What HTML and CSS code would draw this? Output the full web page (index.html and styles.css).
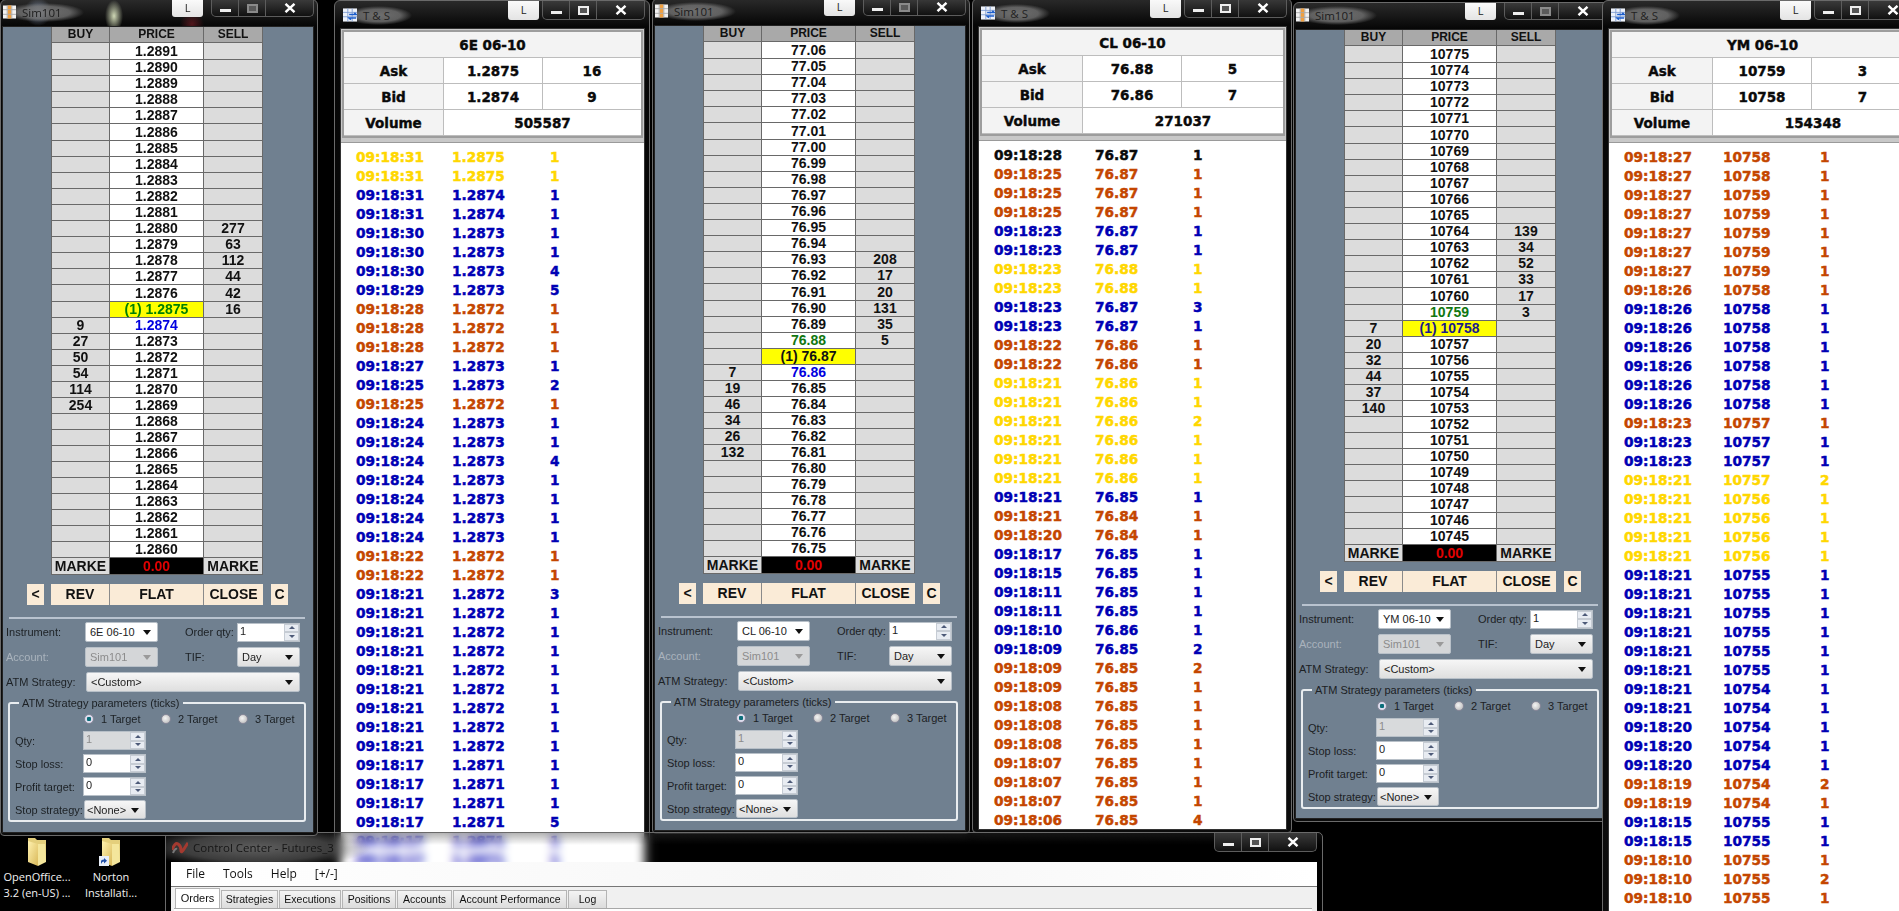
FILE: index.html
```html
<!DOCTYPE html>
<html lang="en">

<head>
  <meta charset="UTF-8">
  <meta name="viewport" content="width=device-width, initial-scale=1.0">
  <title>Futures_3</title>
  <link rel="stylesheet" href="styles.css">
</head>

<body>
  <div id="desktop">
    <!-- desktop icons -->
    <div class="desk-icon icon-a">
      <svg class="folder" viewBox="0 0 20 28"><use href="#folder"></use></svg>
      <span>OpenOffice...<br>3.2 (en-US) ...</span>
    </div>
    <div class="desk-icon icon-b">
      <svg class="folder" viewBox="0 0 20 28"><use href="#folder"></use></svg>
      <svg class="shortcut" viewBox="0 0 10 10"><rect width="10" height="10" fill="#e8eef8"/><path d="M2 8V5.500Q2 3.500 5 3.500V2l3 2.700L5 7.400V5.600Q3.200 5.600 2 8z" fill="#1f4fa8"/></svg>
      <span>Norton<br>Installati...</span>
    </div>

    <!-- control center -->
    <div class="cc">
      <div class="cc-bar">
        <svg class="cc-icon" viewBox="0 0 16 14"><path d="M0 9Q3 1 6 3T9 9t3-1 4-6" fill="none" stroke="#a33a30" stroke-width="3"/><path d="M1 12Q3 7 5 8" fill="none" stroke="#777" stroke-width="2"/></svg>
        <span class="cc-title">Control Center - Futures_3</span>
        <div class="caption cc-caption">
          <div class="cap-btn cap-min"><i></i></div>
          <div class="cap-btn cap-max"><i></i></div>
          <div class="cap-btn cap-close"><svg viewBox="0 0 12 10"><path d="M1.500 0.800 10.500 9.200M10.500 0.800 1.500 9.200" stroke="#fff" stroke-width="2.400"/></svg></div>
        </div>
      </div>
      <div class="cc-client">
        <ul class="cc-menu">
          <li>File</li>
          <li>Tools</li>
          <li>Help</li>
          <li>[+/-]</li>
        </ul>
        <ul class="cc-tabs">
          <li class="active tab-orders">Orders</li>
          <li class="tab-strategies">Strategies</li>
          <li class="tab-executions">Executions</li>
          <li class="tab-positions">Positions</li>
          <li class="tab-accounts">Accounts</li>
          <li class="tab-performance">Account Performance</li>
          <li class="tab-log">Log</li>
        </ul>
        <div class="cc-pane"></div>
      </div>
    </div>
  </div>

  <svg class="defs" width="0" height="0">
    <defs>
      <linearGradient id="fold" x1="0" y1="0" x2="1" y2="1">
        <stop offset="0" stop-color="#fff2b0"/>
        <stop offset="1" stop-color="#d9b95a"/>
      </linearGradient>
      <g id="folder">
        <path d="M1 0h7l2 2h9v22H1z" fill="#e4cf7c"/>
        <path d="M1 3 11 6v22L1 24z" fill="url(#fold)"/>
        <path d="M11 6h7l1 18-8 4z" fill="#f4e69c"/>
      </g>
    </defs>
  </svg>

  <script src="script.js"></script>
</body>

</html>
```

FILE: styles.css
```css
* {
  margin: 0;
  padding: 0;
  box-sizing: border-box;
}

html,
body {
  height: 100%;
  overflow: hidden;
  background-color: #000;
}

body {
  font-family: "Liberation Sans", Arial, sans-serif;
}

li {
  list-style: none;
}

#desktop {
  position: relative;
  width: 1899px;
  height: 911px;
  overflow: hidden;
}

.defs {
  position: absolute;
}

/* window frames */
.win {
  position: absolute;
  border: 1px solid #6a6a6a;
  border-radius: 6px 6px 4px 4px;
  background: linear-gradient(#2a2a2a, #060606 26px, #0c0c0c);
  display: flex;
  flex-direction: column;
}

.w1 {
  left: 0;
  top: -1px;
  width: 318px;
  height: 837px;
  padding: 0 3px 2px 1px;
  z-index: 7;
}

.w2 {
  left: 334px;
  top: 0;
  width: 316px;
  height: 880px;
  padding: 0 4px 0 5px;
  z-index: 1;
}

.w3 {
  left: 652px;
  top: -2px;
  width: 318px;
  height: 836px;
  padding: 0 3px 2px 1px;
  z-index: 2;
}

.w4 {
  left: 972px;
  top: -2px;
  width: 320px;
  height: 835px;
  padding: 0 4px 2px 5px;
  z-index: 3;
}

.w5 {
  left: 1293px;
  top: 2px;
  width: 318px;
  height: 820px;
  padding: 0 3px 2px 1px;
  z-index: 4;
}

.w6 {
  left: 1602px;
  top: 0;
  width: 320px;
  height: 930px;
  padding: 0 4px 0 5px;
  z-index: 5;
}

.bar {
  height: 26px;
  flex: none;
  display: flex;
  align-items: flex-start;
}

.w1 .bar {
  background:
    radial-gradient(circle at 36px 12px, rgba(190, 215, 255, .55), transparent 14px),
    radial-gradient(ellipse 9px 16px at 112px 16px, rgba(240, 250, 210, .85), transparent),
    radial-gradient(circle at 190px 24px, rgba(130, 30, 40, .6), transparent 12px);
}

.ts .bar {
  height: 27px;
}

.bar-icon {
  position: relative;
  width: 13px;
  height: 14px;
  margin: 5px 0 0 1px;
  flex: none;
}

.ts .bar-icon {
  width: 14px;
  height: 14px;
  margin: 7px 0 0 3px;
}

/* the glass glow runs out past the text on both sides */
.bar-title {
  margin: 3px 0 0 -12px;
  padding: 2px 22px 2px 18px;
  font-family: "Open Sans", sans-serif;
  font-size: 11.5px;
  line-height: 15px;
  color: #1c1c1c;
  background: radial-gradient(ellipse closest-side, rgba(120, 120, 120, .9), rgba(120, 120, 120, .75) 65%, transparent);
}

.ts .bar-title {
  margin-top: 5px;
  color: #222;
}

.l-btn {
  margin-left: auto;
  width: 31px;
  height: 17px;
  background: linear-gradient(#fafafa, #e4e4e4);
  border-radius: 0 0 3px 3px;
  font-family: "Open Sans", sans-serif;
  font-size: 11px;
  line-height: 15px;
  text-align: center;
  color: #222;
  flex: none;
}

.ts .l-btn {
  height: 19px;
  line-height: 17px;
}

.caption {
  display: flex;
  height: 17px;
  margin-left: 8px;
  border: 1px solid #5c5c5c;
  border-top: 0;
  border-radius: 0 0 5px 5px;
  background: linear-gradient(#3a3a3a, #111);
  flex: none;
}

.ts .caption {
  height: 19px;
  margin-left: 3px;
}

.cap-btn {
  display: flex;
  align-items: center;
  justify-content: center;
  width: 27px;
  border-right: 1px solid #5c5c5c;
}

.cap-close {
  width: 47px;
  border-right: 0;
}

.cap-min i {
  display: block;
  width: 11px;
  height: 3px;
  margin-top: 4px;
  background-color: #eee;
}

.cap-max i {
  display: block;
  width: 11px;
  height: 9px;
  border: 2px solid #eee;
  background-color: #555;
}

.dom .cap-max i {
  border-color: #8a8a8a;
  background-color: #5a5a5a;
}

.cap-close svg {
  width: 12px;
  height: 10px;
}

/* order ladder */
.dom-client {
  flex: 1;
  background-color: #708090;
  border: 1px solid #222;
  min-height: 0;
}

.ladder {
  margin-left: 48px;
  width: 212px;
  font-size: 14px;
  font-weight: bold;
  color: #111;
}

.row {
  display: grid;
  grid-template-columns: 59px 94px 59px;
  height: 16px;
  line-height: 15px;
  text-align: center;
}

.row.tall {
  height: 17px;
  line-height: 17px;
}

.row div {
  background-color: #dcdcdc;
  border-right: 1px solid #696969;
  border-bottom: 1px solid #696969;
  overflow: hidden;
}

.row div:first-child {
  border-left: 1px solid #696969;
}

.row .price {
  background-color: #fff;
}

.row .hit {
  background-color: #ff0;
  color: #008000;
}

.w3 .row .hit {
  color: #111;
}

.w5 .row .hit {
  color: #1a1a8c;
}

.row .bid {
  color: #0000e0;
}

.row .ask {
  color: #117711;
}

.head {
  font-size: 12px;
}

.head div,
.head .price {
  background-color: #a9a9a9;
}

.foot {
  height: 17px;
  line-height: 17px;
}

.foot .pnl {
  background-color: #000;
  color: #e00000;
}

.buttons {
  display: flex;
  margin: 9px 0 0 24px;
  height: 21px;
  font-size: 14px;
  font-weight: bold;
  line-height: 21px;
  text-align: center;
  color: #111;
}

.buttons div {
  background-color: #faebd7;
}

.btn-small {
  width: 17px;
}

.btn-rev {
  width: 59px;
  margin-left: 7px;
  border-right: 1px solid #8a8a8a;
}

.btn-flat {
  width: 94px;
  border-right: 1px solid #8a8a8a;
}

.btn-close {
  width: 59px;
  margin-right: 8px;
}

.sep {
  height: 2px;
  margin: 12px 8px 0 6px;
  background-color: #b9c3cf;
}

/* order form */
.dom-form {
  margin-top: 3px;
  padding: 0 0 0 3px;
  font-size: 11px;
  color: #1c2024;
}

.form-row {
  display: flex;
  align-items: center;
  height: 20px;
  margin-bottom: 5px;
}

.form-label {
  width: 79px;
  flex: none;
}

.form-label-right {
  width: 52px;
  margin-left: 27px;
  flex: none;
}

.dim {
  color: #aab3bd;
}

.combo {
  position: relative;
  height: 20px;
  line-height: 18px;
  padding-left: 4px;
  border: 1px solid #b8c0c8;
  border-radius: 2px;
  background: linear-gradient(#f6f6f6, #dfdfdf);
  color: #222;
}

.combo::after {
  content: "";
  position: absolute;
  right: 6px;
  top: 7px;
  border-left: 4px solid transparent;
  border-right: 4px solid transparent;
  border-top: 5px solid #111;
}

.combo-white {
  background: #fff;
}

.combo-dim {
  background: #d4d6d8;
  color: #8c8c8c;
}

.combo-dim::after {
  border-top-color: #9a9a9a;
}

.c-instrument,
.c-account {
  width: 73px;
}

.c-tif {
  width: 63px;
}

.c-atm {
  width: 214px;
  margin-left: 1px;
}

.c-stop {
  width: 62px;
  height: 19px;
  margin-left: 1px;
  padding-left: 2px;
}

.spin {
  display: flex;
  justify-content: space-between;
  background-color: #fff;
  border: 1px solid #b8c0c8;
  width: 63px;
  height: 19px;
  line-height: 15px;
  padding-left: 2px;
  color: #222;
}

.spin-dim {
  background-color: #d8dadc;
  color: #8c8c8c;
}

.spin b {
  display: flex;
  flex-direction: column;
  width: 15px;
  flex: none;
}

.spin i {
  flex: 1;
  display: flex;
  align-items: center;
  justify-content: center;
  background-color: #e8ecf2;
  border: 1px solid #c6ccd4;
}

.spin .up::after {
  content: "";
  border-left: 3px solid transparent;
  border-right: 3px solid transparent;
  border-bottom: 3px solid #4d5a78;
}

.spin .down::after {
  content: "";
  border-left: 3px solid transparent;
  border-right: 3px solid transparent;
  border-top: 3px solid #4d5a78;
}

.atm-group {
  width: 298px;
  height: 125px;
  margin: 3px 0 0 2px;
  padding: 2px 0 0 5px;
  border: 2px solid #e9edf0;
  border-radius: 3px;
  min-inline-size: 0;
}

.atm-group legend {
  margin-left: 4px;
  padding: 0 3px;
  line-height: 12px;
}

.radios {
  display: flex;
  height: 16px;
  margin: 0 0 4px 69px;
}

.radio {
  display: flex;
  align-items: center;
  gap: 7px;
  width: 77px;
  flex: none;
}

.radio i {
  width: 10px;
  height: 10px;
  border-radius: 50%;
  border: 1px solid #889;
  background: radial-gradient(circle at 40% 40%, #f4f4f4, #b4b4b4);
}

.radio .on {
  background: radial-gradient(circle, #0b6e7a 35%, #dde 45%);
}

.atm-row {
  display: flex;
  align-items: center;
  height: 19px;
  margin-bottom: 4px;
}

.atm-label {
  width: 68px;
  flex: none;
}

/* time and sales */
.ts-client {
  flex: 1;
  min-height: 0;
  display: flex;
  flex-direction: column;
  border: 1px solid #333;
  background-color: #c8c8c8;
}

.quote {
  margin: 1px 1px 0;
  border: 2px solid #9d9d9d;
  background-color: #f3f3f3;
  display: grid;
  grid-template-rows: repeat(4, 26px);
  grid-template-columns: 100px 99px 1fr;
  font-family: "DejaVu Sans", sans-serif;
  font-weight: bold;
  font-size: 13.5px;
  line-height: 26px;
  text-align: center;
  color: #0a0a0a;
  -webkit-text-stroke: .4px currentColor;
  flex: none;
}

.w4 .quote,
.w6 .quote {
  grid-template-columns: 101px 99px 1fr;
}

.quote div {
  border-bottom: 1px solid #bdbdbd;
}

.q-title {
  grid-column: 1 / 4;
}

.q-label {
  border-right: 1px solid #bdbdbd;
}

.q-val {
  background-color: #fff;
}

.q-mid {
  border-right: 1px solid #bdbdbd;
}

.q-wide {
  grid-column: 2 / 4;
}

.tape {
  flex: 1;
  margin-top: 4px;
  padding-top: 5px;
  overflow: hidden;
  background-color: #fff;
  border-top: 1px solid #9a9a9a;
  font-family: "DejaVu Sans", sans-serif;
  font-weight: bold;
  font-size: 13.7px;
  line-height: 19px;
}

.tape li {
  display: grid;
  grid-template-columns: 96px 98px 1fr;
  height: 19px;
  padding-left: 15px;
  -webkit-text-stroke: .45px currentColor;
}

.w4 .tape li {
  grid-template-columns: 101px 98px 1fr;
}

.w6 .tape li {
  grid-template-columns: 99px 97px 1fr;
}

.y {
  color: #ffd700;
}

.b {
  color: #0000b4;
}

.o {
  color: #c44600;
}

.k {
  color: #0a0a0a;
}

/* control center window */
.cc {
  position: absolute;
  left: 165px;
  top: 832px;
  width: 1158px;
  height: 90px;
  z-index: 6;
  border: 1px solid #6a6a6a;
  border-radius: 5px 5px 0 0;
  padding: 0 5px;
  backdrop-filter: blur(5px);
  background:
    radial-gradient(ellipse 115px 20px at 90px 15px, rgba(100, 100, 100, .95), rgba(100, 100, 100, .6) 65%, transparent),
    linear-gradient(rgba(40, 40, 40, .35), transparent 12px);
}

.cc-bar {
  display: flex;
  height: 29px;
}

.cc-icon {
  width: 16px;
  height: 14px;
  margin: 8px 0 0 1px;
  flex: none;
}

.cc-title {
  margin: 6px 0 0 5px;
  font-family: "Open Sans", sans-serif;
  font-size: 11.5px;
  line-height: 17px;
  color: #161616;
}

.cc-caption {
  margin-left: auto;
  height: 19px;
}

.cc-caption .cap-close {
  width: 47px;
}

.cc-client {
  background-color: #f0f0f0;
  font-family: "Open Sans", sans-serif;
  color: #111;
}

.cc-menu {
  display: flex;
  height: 25px;
  padding-left: 15px;
  font-size: 12px;
  line-height: 24px;
  background: linear-gradient(90deg, #fff, #f6f6f6 60%, #fff);
  border-bottom: 1px solid #777;
}

.cc-menu li {
  margin-right: 18px;
}

.cc-tabs {
  display: flex;
  height: 21px;
  padding: 3px 0 0 4px;
  font-family: "Liberation Sans", sans-serif;
  font-size: 10.5px;
  line-height: 17px;
  text-align: center;
}

.cc-tabs li {
  border: 1px solid #b4b4b4;
  border-bottom: 0;
  margin-right: 1px;
  background: linear-gradient(#f4f4f4, #dcdcdc);
}

.cc-tabs .active {
  background: #fff;
  margin-top: -2px;
  line-height: 18px;
  height: 20px;
  font-size: 11px;
}

.tab-orders {
  width: 45px;
}

.tab-strategies {
  width: 57px;
}

.tab-executions {
  width: 62px;
}

.tab-positions {
  width: 54px;
}

.tab-accounts {
  width: 55px;
}

.tab-performance {
  width: 114px;
}

.tab-log {
  width: 39px;
}

.cc-pane {
  height: 30px;
  margin: 0 5px 0 3px;
  border-top: 1px solid #a8a8a8;
  background-color: #fff;
}

/* desktop icons */
.desk-icon {
  position: absolute;
  top: 838px;
  width: 78px;
  text-align: center;
  font-family: "Open Sans", sans-serif;
  font-size: 11px;
  line-height: 16px;
  color: #f2f2f2;
  z-index: 0;
}

.icon-a {
  left: -2px;
}

.icon-b {
  left: 72px;
}

.folder {
  display: block;
  width: 20px;
  height: 28px;
  margin: 0 auto 3px;
}

.desk-icon span {
  display: block;
  white-space: nowrap;
}

.shortcut {
  position: absolute;
  left: 27px;
  top: 18px;
  width: 10px;
  height: 10px;
}
```

FILE: script.js
```js
var desktop = document.getElementById("desktop");

var SIM_ICON = '<svg class="bar-icon" viewBox="0 0 14 14"><rect width="14" height="14" fill="#f2f2f2"/><path d="M5 0h4v14H5z" fill="#f0a040"/><path d="M0 4.500h14M0 9.500h14M4.500 0v14M9.500 0v14" stroke="#aaa"/></svg>';
var TS_ICON = '<svg class="bar-icon" viewBox="0 0 16 15"><rect width="16" height="15" fill="#eef2fa"/><path d="M0 4.500h16M0 9.500h16M5.500 0v15M10.500 0v15" stroke="#7d9ad0"/><path d="M7 7h8l-2-2M15 11H7l2 2" fill="none" stroke="#1c5ecc" stroke-width="1.800"/></svg>';

function caption() {
  return '<div class="l-btn">L</div>' +
    '<div class="caption">' +
    '<div class="cap-btn cap-min"><i></i></div>' +
    '<div class="cap-btn cap-max"><i></i></div>' +
    '<div class="cap-btn cap-close"><svg viewBox="0 0 12 10"><path d="M1.500 0.800 10.500 9.200M10.500 0.800 1.500 9.200" stroke="#fff" stroke-width="2.400"/></svg></div>' +
    '</div>';
}

function spin(value, cls) {
  return '<div class="spin ' + (cls || "") + '">' + value + '<b><i class="up"></i><i class="down"></i></b></div>';
}

function combo(value, cls) {
  return '<div class="combo ' + cls + '">' + value + '</div>';
}

// 价格阶梯窗口
function domWindow(o) {
  var rows = "";
  for (var i = 0; i < o.count; i++) {
    var price = (o.start - i * o.tick).toFixed(o.digits);
    var buy = o.buy[i - o.hit - (o.buyOnHit ? 0 : 1)];
    var sell = o.sell[i - o.sellAt];
    var cls = "price";
    if (i == o.hit) {
      cls += " hit";
      price = "(1) " + price;
    } else if (i == o.hit + 1 && o.blue) {
      cls += " bid";
    } else if (i == o.hit - 1 && o.green) {
      cls += " ask";
    }
    var tall = i == 0 || i == 5 || i == 15 ? " tall" : "";
    rows += '<div class="row' + tall + '"><div>' + (buy || "") + '</div><div class="' + cls + '">' + price + '</div><div>' + (sell || "") + '</div></div>';
  }
  return '<div class="win dom ' + o.id + '">' +
    '<div class="bar">' + SIM_ICON + '<span class="bar-title">Sim101</span>' + caption() + '</div>' +
    '<div class="dom-client">' +
    '<div class="ladder">' +
    '<div class="row head"><div>BUY</div><div class="price">PRICE</div><div>SELL</div></div>' +
    rows +
    '<div class="row foot"><div>MARKE</div><div class="pnl">0.00</div><div>MARKE</div></div>' +
    '</div>' +
    '<div class="buttons"><div class="btn-small">&lt;</div><div class="btn-rev">REV</div><div class="btn-flat">FLAT</div><div class="btn-close">CLOSE</div><div class="btn-small">C</div></div>' +
    '<div class="sep"></div>' +
    '<div class="dom-form">' +
    '<div class="form-row"><span class="form-label">Instrument:</span>' + combo(o.instrument, "combo-white c-instrument") + '<span class="form-label-right">Order qty:</span>' + spin(1) + '</div>' +
    '<div class="form-row"><span class="form-label dim">Account:</span>' + combo("Sim101", "combo-dim c-account") + '<span class="form-label-right">TIF:</span>' + combo("Day", "c-tif") + '</div>' +
    '<div class="form-row"><span class="form-label">ATM Strategy:</span>' + combo("&lt;Custom&gt;", "c-atm") + '</div>' +
    '<fieldset class="atm-group"><legend>ATM Strategy parameters (ticks)</legend>' +
    '<div class="radios"><div class="radio"><i class="on"></i>1 Target</div><div class="radio"><i></i>2 Target</div><div class="radio"><i></i>3 Target</div></div>' +
    '<div class="atm-row"><span class="atm-label">Qty:</span>' + spin(1, "spin-dim") + '</div>' +
    '<div class="atm-row"><span class="atm-label">Stop loss:</span>' + spin(0) + '</div>' +
    '<div class="atm-row"><span class="atm-label">Profit target:</span>' + spin(0) + '</div>' +
    '<div class="atm-row"><span class="atm-label">Stop strategy:</span>' + combo("&lt;None&gt;", "c-stop") + '</div>' +
    '</fieldset>' +
    '</div></div></div>';
}

// 成交明细窗口
function tsWindow(o) {
  var rows = "";
  o.ticks.forEach(function (t) {
    var p = t.split(" ");
    var times = p[4] || 1;
    for (var i = 0; i < times; i++) {
      rows += '<li class="' + p[0] + '"><span>09:18:' + p[1] + '</span><span>' + p[2] + '</span><span>' + p[3] + '</span></li>';
    }
  });
  return '<div class="win ts ' + o.id + '">' +
    '<div class="bar">' + TS_ICON + '<span class="bar-title">T &amp; S</span>' + caption() + '</div>' +
    '<div class="ts-client">' +
    '<div class="quote">' +
    '<div class="q-title">' + o.name + '</div>' +
    '<div class="q-label">Ask</div><div class="q-val q-mid">' + o.ask[0] + '</div><div class="q-val">' + o.ask[1] + '</div>' +
    '<div class="q-label">Bid</div><div class="q-val q-mid">' + o.bid[0] + '</div><div class="q-val">' + o.bid[1] + '</div>' +
    '<div class="q-label">Volume</div><div class="q-val q-wide">' + o.volume + '</div>' +
    '</div>' +
    '<ul class="tape">' + rows + '</ul>' +
    '</div></div>';
}

var html = "";

html += domWindow({
  id: "w1", instrument: "6E 06-10", start: 1.2891, tick: 0.0001, digits: 4, count: 32,
  sellAt: 11, sell: [277, 63, 112, 44, 42, 16], hit: 16, blue: true,
  buy: [9, 27, 50, 54, 114, 254]
});
html += tsWindow({
  id: "w2", name: "6E 06-10", ask: ["1.2875", 16], bid: ["1.2874", 9], volume: 505587,
  ticks: [
    "y 31 1.2875 1 2", "b 31 1.2874 1 2", "b 30 1.2873 1 2", "b 30 1.2873 4", "b 29 1.2873 5",
    "o 28 1.2872 1 3", "b 27 1.2873 1", "b 25 1.2873 2", "o 25 1.2872 1",
    "b 24 1.2873 1 2", "b 24 1.2873 4", "b 24 1.2873 1 4", "o 22 1.2872 1 2",
    "b 21 1.2872 3", "b 21 1.2872 1 8", "b 17 1.2871 1 3", "b 17 1.2871 5", "b 17 1.2871 1 2"
  ]
});
html += domWindow({
  id: "w3", instrument: "CL 06-10", start: 77.06, tick: 0.01, digits: 2, count: 32,
  sellAt: 13, sell: [208, 17, 20, 131, 35, 5], hit: 19, blue: true, green: true,
  buy: [7, 19, 46, 34, 26, 132]
});
html += tsWindow({
  id: "w4", name: "CL 06-10", ask: ["76.88", 5], bid: ["76.86", 7], volume: 271037,
  ticks: [
    "k 28 76.87 1", "o 25 76.87 1 3", "b 23 76.87 1 2", "y 23 76.88 1 2", "b 23 76.87 3", "b 23 76.87 1",
    "o 22 76.86 1 2", "y 21 76.86 1 2", "y 21 76.86 2", "y 21 76.86 1 3", "b 21 76.85 1", "o 21 76.84 1",
    "o 20 76.84 1", "b 17 76.85 1", "b 15 76.85 1", "b 11 76.85 1 2", "b 10 76.86 1", "b 09 76.85 2",
    "o 09 76.85 2", "o 09 76.85 1", "o 08 76.85 1 3", "o 07 76.85 1 3", "o 06 76.85 4"
  ]
});
html += domWindow({
  id: "w5", instrument: "YM 06-10", start: 10775, tick: 1, digits: 0, count: 31,
  sellAt: 11, sell: [139, 34, 52, 33, 17, 3], hit: 17, green: true, buyOnHit: true,
  buy: [7, 20, 32, 44, 37, 140]
});
html += tsWindow({
  id: "w6", name: "YM 06-10", ask: ["10759", 3], bid: ["10758", 7], volume: 154348,
  ticks: [
    "o 27 10758 1 2", "o 27 10759 1 5", "o 26 10758 1", "b 26 10758 1 6", "o 23 10757 1", "b 23 10757 1 2",
    "y 21 10757 2", "y 21 10756 1 4", "b 21 10755 1 6", "b 21 10754 1 2", "b 20 10754 1 3",
    "o 19 10754 2", "o 19 10754 1", "b 15 10755 1 2", "o 10 10755 1", "o 10 10755 2", "o 10 10755 1"
  ]
});

desktop.insertAdjacentHTML("beforeend", html);
```
